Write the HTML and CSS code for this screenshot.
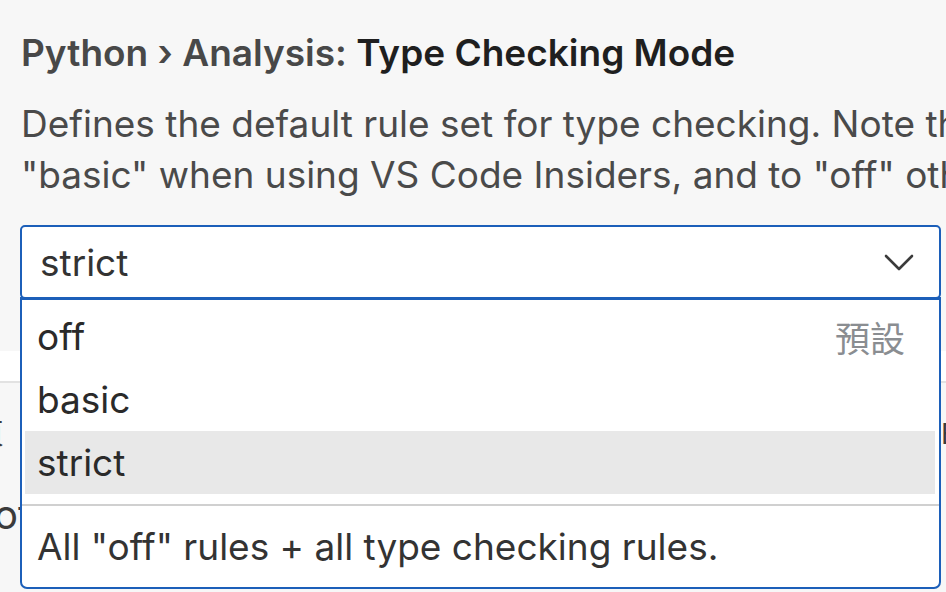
FILE: index.html
```html
<!DOCTYPE html>
<html>
<head>
<meta charset="utf-8">
<link rel="stylesheet" href="styles.css">
</head>
<body>
<div class="setting">
  <div class="title"><span class="cat">Python › Analysis: </span><span class="name">Type Checking Mode</span></div>
  <div class="desc">Defines the default rule set for type checking. Note that the default is set to<br>"basic" when using VS Code Insiders, and to "off" otherwise.</div>
  <div class="select-wrap">
    <div class="select">
      <span class="value">strict</span>
      <svg class="chev" width="30" height="18" viewBox="0 0 30 18"><path d="M2 2 L15 15 L28 2" fill="none" stroke="#3b3b3b" stroke-width="2.6" stroke-linecap="round" stroke-linejoin="round"/></svg>
    </div>
    <div class="dropdown">
      <div class="list">
        <div class="item"><span>off</span><span class="default">預設</span></div>
        <div class="item"><span>basic</span></div>
        <div class="item selected"><span>strict</span></div>
      </div>
      <div class="details">All "off" rules + all type checking rules.</div>
    </div>
  </div>
</div>
<div class="below">
  <div class="band"></div>
  <div class="row row1"><span class="l">頁</span><span></span><span class="r">Editor</span></div>
  <div class="row row2"><span class="l">ot</span><span></span><span class="r"></span></div>
</div>
</body>
</html>
```
FILE: styles.css
```css
html, body {
  margin: 0;
  padding: 0;
}
body {
  background: #f7f7f7;
  width: 946px;
  height: 592px;
  overflow: hidden;
  font-family: Inter, "Noto Sans CJK TC", sans-serif;
  color: #3b3b3b;
}
.setting {
  padding: 26px 0 0 20px;
}
.title {
  font-size: 37px;
  line-height: 54px;
  font-weight: 600;
  white-space: nowrap;
  padding-left: 1px;
}
.title .cat {
  color: #484848;
}
.title .name {
  color: #1f1f1f;
}
.desc {
  margin-top: 18px;
  font-size: 37px;
  line-height: 51px;
  white-space: nowrap;
  color: #4a4a4a;
  padding-left: 1px;
}
.select-wrap {
  position: relative;
  width: 921px;
  margin-top: 25px;
}
.select {
  box-sizing: border-box;
  height: 74px;
  border: 2px solid #1c5fb9;
  border-radius: 5px;
  background: #fff;
  display: flex;
  align-items: center;
  justify-content: space-between;
  padding: 0 25px 0 18px;
  font-size: 37px;
  color: #333;
}
.chev {
  display: block;
  margin-top: 2px;
}
.dropdown {
  position: absolute;
  top: 72px;
  left: 0;
  right: 0;
  box-sizing: border-box;
  height: 292px;
  border: 2px solid #1c5fb9;
  border-top-width: 3px;
  border-radius: 0 0 7px 7px;
  background: #fff;
  z-index: 2;
}
.list {
  padding: 5px 4px 0 3px;
}
.item {
  height: 63px;
  display: flex;
  align-items: center;
  justify-content: space-between;
  padding: 0 30px 0 12px;
  font-size: 37px;
  color: #2a2a2a;
}
.item.selected {
  background: #e8e8e8;
}
.default {
  color: #8a8d91;
  font-size: 35px;
}
.details {
  margin-top: 10px;
  border-top: 2px solid #d0d0d0;
  padding: 12px 14px 0 15px;
  font-size: 37px;
  line-height: 58px;
  color: #333;
  white-space: nowrap;
}
.below {
  margin-top: 52px;
}
.band {
  height: 30px;
  background: #fff;
  border-bottom: 2px solid #e2e2e2;
}
.row {
  display: grid;
  grid-template-columns: 20px 921px 1fr;
  white-space: nowrap;
  color: #3b3b3b;
}
.row1 {
  margin-top: 36px;
  font-size: 28px;
  line-height: 30px;
}
.row1 .l {
  margin-left: -24px;
}
.row2 {
  margin-top: 44px;
  font-size: 40px;
  line-height: 44px;
}
.row2 .l {
  margin-left: -6px;
}
```
